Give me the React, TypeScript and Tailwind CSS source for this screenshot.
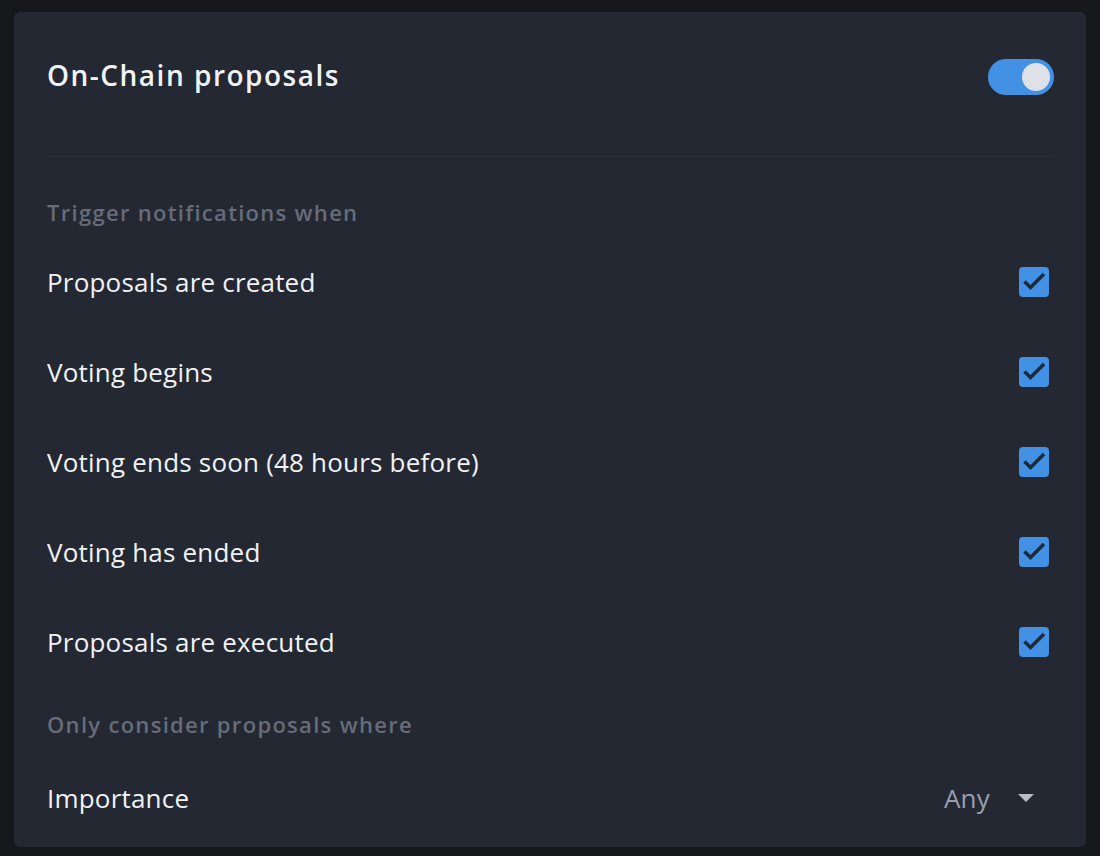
import React from "react";

const rows = [
  "Proposals are created",
  "Voting begins",
  "Voting ends soon (48 hours before)",
  "Voting has ended",
  "Proposals are executed",
];

function Check() {
  return (
    <div className="w-[30px] h-[30px] rounded-[4px] bg-[#4391e4] mr-[5px]">
      <svg width="30" height="30" viewBox="0 0 30 30">
        <path d="M5.5 14.5 L11.5 20.5 L25 7" fill="none" stroke="#232833" strokeWidth="3.5" />
      </svg>
    </div>
  );
}

export default function App() {
  return (
    <div className="w-[1100px] h-[856px] bg-[#17181c] pt-[12px] pl-[14px] pr-[14px]" style={{ fontFamily: "'Open Sans', 'Noto Sans', sans-serif" }}>
      <div className="w-[1072px] h-[835px] bg-[#232833] rounded-[6px] pl-[33px] pr-[32px]">
        <div className="pt-[47px] flex items-center justify-between h-[83px]">
          <div className="text-[28px] font-semibold text-[#f1f2f4] leading-[36px] -mt-[4px] tracking-[1.5px]">On-Chain proposals</div>
          <div className="w-[66px] h-[36px] rounded-full bg-[#4391e4] flex items-center justify-end pr-[4px]">
            <div className="w-[28px] h-[28px] rounded-full bg-[#dfe1e8]" />
          </div>
        </div>
        <div className="mt-[61px] h-px bg-[#2c313c] mr-[1px]" />
        <div className="pt-[40px] h-[80px] text-[22px] font-semibold text-[#666c78] leading-[30px] tracking-[1.3px]">Trigger notifications when</div>
        {rows.map((r) => (
          <div key={r} className="h-[90px] flex items-center justify-between">
            <div className="text-[26px] text-[#f1f2f4] leading-[32px] tracking-[0.2px]">{r}</div>
            <Check />
          </div>
        ))}
        <div className="pt-[22px] h-[68px] text-[22px] font-semibold text-[#666c78] leading-[30px] tracking-[1.3px]">Only consider proposals where</div>
        <div className="h-[86px] flex items-center justify-between">
          <div className="text-[26px] text-[#f1f2f4] leading-[32px] tracking-[0.2px]">Importance</div>
          <div className="flex items-center mr-[20px]">
            <span className="text-[26px] text-[#9a9fac] leading-[32px] tracking-[0.2px]">Any</span>
            <svg width="16" height="8" viewBox="0 0 16 8" className="ml-[28px]">
              <path d="M0 0 L16 0 L8 8 Z" fill="#b8bcc8" />
            </svg>
          </div>
        </div>
      </div>
    </div>
  );
}
